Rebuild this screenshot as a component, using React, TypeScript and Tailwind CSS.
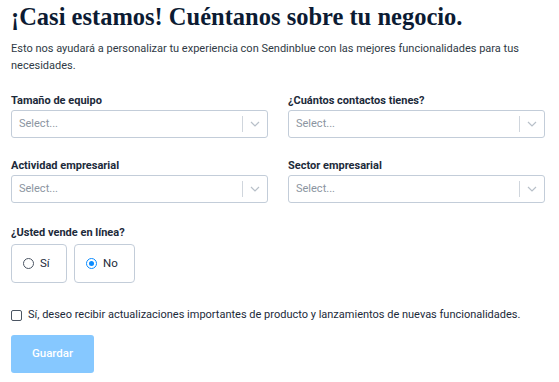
import { useState } from "react";

const sans = { fontFamily: 'Roboto, "Liberation Sans", sans-serif' };

function Chevron() {
  return (
    <svg width="10" height="6" viewBox="0 0 10 6" fill="none">
      <path d="M1 1l4 4 4-4" stroke="#b8c0c9" strokeWidth="1.2" />
    </svg>
  );
}

function SelectField({ label }: { label: string }) {
  return (
    <div className="flex flex-col">
      <label className="text-[11px] font-bold text-[#1c2a3a] leading-[14px] mb-[2px]">
        {label}
      </label>
      <div className="h-[28px] border border-[#c3cdd9] rounded-[3px] flex items-center bg-white">
        <span className="flex-1 pl-[7px] text-[11px] text-[#8b95a1]">Select...</span>
        <span className="w-px h-[16px] bg-[#d0d6dd]" />
        <span className="w-[24px] flex items-center justify-center">
          <Chevron />
        </span>
      </div>
    </div>
  );
}

export default function App() {
  const [sells, setSells] = useState("no");

  return (
    <div className="w-[559px] h-[382px] bg-white pl-[11px] pr-[14px] pt-[2px]" style={sans}>
      <h1
        className="text-[24.5px] font-bold text-[#0c1b33] leading-[30px]"
        style={{ fontFamily: '"Liberation Serif", "DejaVu Serif", serif' }}
      >
        ¡Casi estamos! Cuéntanos sobre tu negocio.
      </h1>

      <p className="mt-[8px] text-[11px] leading-[17px] text-[#2f3a45] pr-[20px]">
        Esto nos ayudará a personalizar tu experiencia con Sendinblue con las mejores
        funcionalidades para tus necesidades.
      </p>

      <div className="grid grid-cols-2 gap-x-[20px] gap-y-[21px] mt-[20px]">
        <SelectField label="Tamaño de equipo" />
        <SelectField label="¿Cuántos contactos tienes?" />
        <SelectField label="Actividad empresarial" />
        <SelectField label="Sector empresarial" />
      </div>

      <div className="mt-[23px]">
        <p className="text-[11px] font-bold text-[#1c2a3a] leading-[14px] mb-[4px]">
          ¿Usted vende en línea?
        </p>
        <div className="flex gap-[7px]">
          {[
            { id: "si", text: "Sí", w: "w-[56px]" },
            { id: "no", text: "No", w: "w-[61px]" },
          ].map((o) => (
            <button
              key={o.id}
              onClick={() => setSells(o.id)}
              className={`${o.w} h-[39px] border border-[#c3cdd9] rounded-[4px] flex items-center pl-[11px] gap-[6px] text-[11.5px] text-[#1c2a3a]`}
            >
              {sells === o.id ? (
                <span className="w-[11px] h-[11px] rounded-full border border-[#0b8cff] flex items-center justify-center">
                  <span className="w-[5px] h-[5px] rounded-full bg-[#0b8cff]" />
                </span>
              ) : (
                <span className="w-[11px] h-[11px] rounded-full border border-[#4b5563]" />
              )}
              {o.text}
            </button>
          ))}
        </div>
      </div>

      <label className="mt-[24px] flex items-center gap-[6px] text-[11px] text-[#1c2a3a]">
        <span className="w-[11px] h-[11px] border border-[#4b5563] rounded-[2px]" />
        Sí, deseo recibir actualizaciones importantes de producto y lanzamientos de nuevas
        funcionalidades.
      </label>

      <button className="mt-[11px] w-[83px] h-[38px] rounded-[3px] bg-[#86c8ff] text-white text-[11.5px] font-medium">
        Guardar
      </button>
    </div>
  );
}
